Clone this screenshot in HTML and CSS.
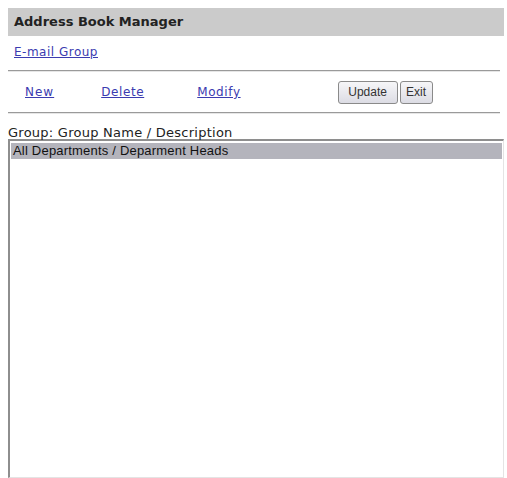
FILE: index.html
```html
<!DOCTYPE html>
<html>
<head>
<meta charset="utf-8">
<link rel="stylesheet" href="styles.css">
</head>
<body>
<div class="page">
  <div class="title">Address Book Manager</div>
  <div class="sub"><a href="#">E-mail Group</a></div>
  <div class="rule"></div>
  <div class="toolbar">
    <a class="act new" href="#">New</a>
    <a class="act del" href="#">Delete</a>
    <a class="act mod" href="#">Modify</a>
    <div class="btns">
      <button class="btn upd">Update</button>
      <button class="btn exit">Exit</button>
    </div>
  </div>
  <div class="rule"></div>
  <div class="label">Group: Group Name / Description</div>
  <div class="list">
    <div class="item sel">All Departments / Deparment Heads</div>
  </div>
</div>
</body>
</html>
```
FILE: styles.css
```css
html, body { margin: 0; padding: 0; background: #fff; }
body { padding: 8px 3px 2px 8px; font-family: "DejaVu Sans", Verdana, sans-serif; }
.page { width: 496px; }
.title {
  height: 28px;
  background: #cbcbcb;
  font-weight: bold;
  font-size: 13px;
  line-height: 28px;
  padding-left: 6px;
  color: #222;
}
.sub { height: 34px; padding-left: 6px; font-size: 12px; line-height: 32px; letter-spacing: 0.5px; }
.sub a { color: #3b3bb0; text-decoration: underline; }
.rule { height: 1px; background: #9a9a9a; border-bottom: 1px solid #e6e6e6; width: 492px; }
.toolbar { height: 40px; display: flex; align-items: center; font-size: 12px; letter-spacing: 0.6px; }
.act { color: #3b3bb0; text-decoration: underline; }
.new { margin-left: 17px; letter-spacing: 1px; }
.del { margin-left: 47px; }
.mod { margin-left: 53px; }
.btns { margin-left: 97px; display: flex; gap: 2px; letter-spacing: 0; }
.btn {
  font-family: "Liberation Sans", Arial, sans-serif;
  font-size: 12px;
  color: #333;
  height: 23px;
  padding: 0 5px;
  border: 1px solid #8a8a8a;
  border-radius: 3px;
  background: linear-gradient(#f6f6f8, #dcdce4);
}
.upd { width: 60px; }
.exit { width: 33px; padding: 0 2px; }
.label { margin-top: 13px; font-size: 13px; color: #222; line-height: 12px; height: 12px; letter-spacing: 0.25px; }
.list {
  height: 334px;
  border-top: 2px solid #8e8e8e;
  border-left: 2px solid #8e8e8e;
  border-right: 1px solid #e4e4e4;
  border-bottom: 1px solid #e4e4e4;
  padding: 2px 1px 0 1px;
}
.item {
  font-family: "Liberation Sans", Arial, sans-serif;
  font-size: 13px;
  height: 16px;
  line-height: 16px;
  padding-left: 2px;
  color: #111;
  letter-spacing: 0.2px;
}
.sel { background: #b4b4bc; }
```
